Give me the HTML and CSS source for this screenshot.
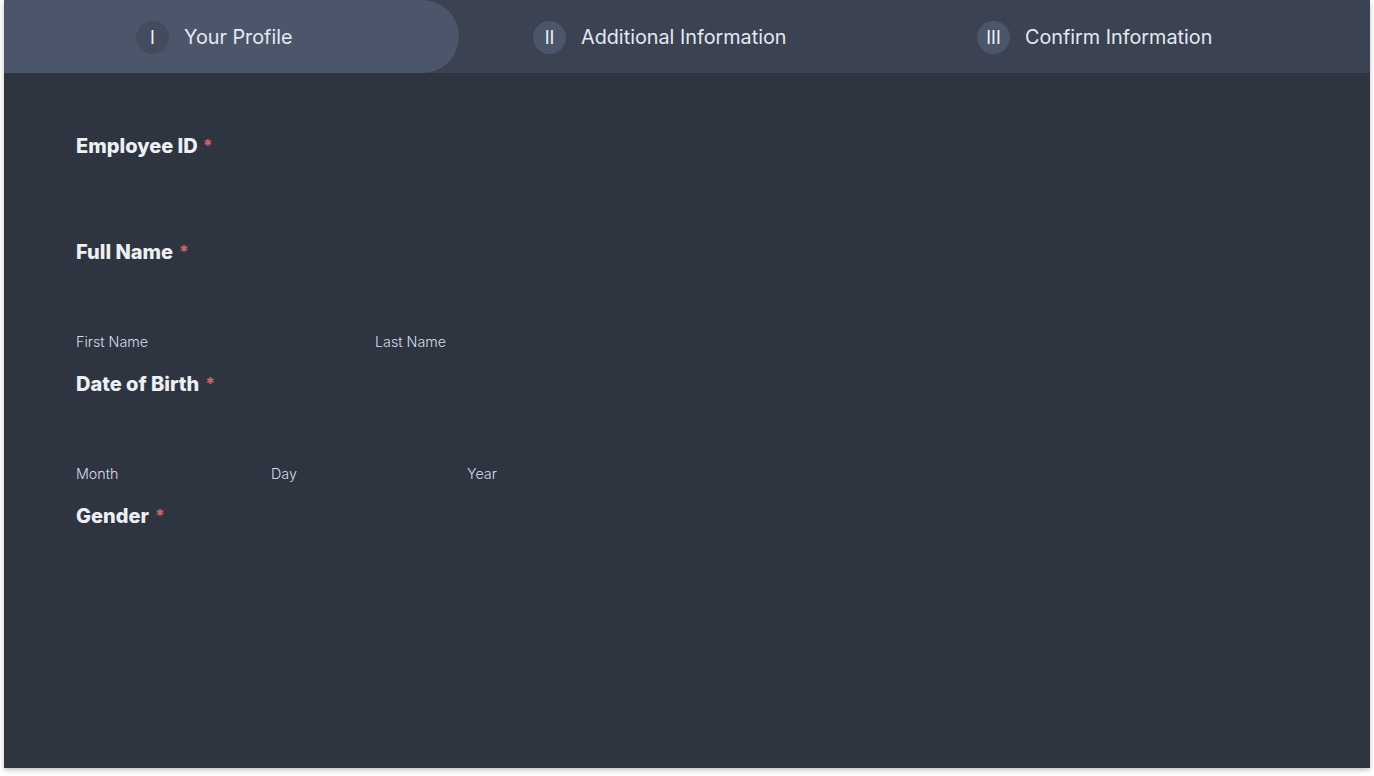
FILE: index.html
```html
<!DOCTYPE html>
<html lang="en">
<head>
<meta charset="utf-8">
<title>Profile</title>
<link rel="stylesheet" href="styles.css">
</head>
<body>
<div class="card">
  <nav class="steps">
    <div class="step step-1 active"><span class="num">I</span><span class="step-label">Your Profile</span></div>
    <div class="step step-2"><span class="num">II</span><span class="step-label">Additional Information</span></div>
    <div class="step step-3"><span class="num">III</span><span class="step-label">Confirm Information</span></div>
  </nav>
  <form class="form">
    <div class="field field-id">
      <div class="label">Employee ID<span class="req req-tight">*</span></div>
      <div class="input-space"></div>
    </div>
    <div class="field field-name">
      <div class="label">Full Name<span class="req">*</span></div>
      <div class="input-space"></div>
      <div class="subrow name-row"><span class="sub">First Name</span><span class="sub">Last Name</span></div>
    </div>
    <div class="field field-dob">
      <div class="label">Date of Birth<span class="req">*</span></div>
      <div class="input-space"></div>
      <div class="subrow dob-row"><span class="sub">Month</span><span class="sub">Day</span><span class="sub">Year</span></div>
    </div>
    <div class="field field-gender">
      <div class="label">Gender<span class="req">*</span></div>
    </div>
  </form>
</div>
</body>
</html>
```
FILE: styles.css
```css
html, body {
  margin: 0;
  padding: 0;
  background: #ffffff;
}
body {
  padding: 0 4px 8px 4px;
  font-family: Inter, "Noto Sans", sans-serif;
}
.card {
  height: 768px;
  background: #2e3440;
  box-shadow: 0 2px 5px rgba(0, 0, 0, 0.25);
  display: flex;
  flex-direction: column;
}
.steps {
  height: 73px;
  background: #3b4252;
  display: grid;
  grid-template-columns: 455px 455px 1fr;
}
.step {
  display: flex;
  align-items: center;
  gap: 15px;
  padding-top: 1px;
  color: #e5e9f0;
}
.step.active {
  background: #4c566a;
  border-radius: 0 37px 37px 0;
}
.step-1 { padding-left: 132px; }
.step-2 { padding-left: 74px; }
.step-3 { padding-left: 63px; }
.num {
  width: 33px;
  height: 33px;
  border-radius: 50%;
  background: #4c566a;
  display: flex;
  align-items: center;
  justify-content: center;
  font-size: 18px;
  color: #eceff4;
}
.active .num {
  background: #434c5e;
}
.step-label {
  font-size: 19.8px;
}
.form {
  padding: 61px 72px 0 72px;
}
.label {
  font-size: 20px;
  line-height: 24px;
  font-weight: 800;
  color: #eceff4;
}
.req {
  color: #c9646e;
  font-size: 17px;
  vertical-align: top;
  margin-left: 6px;
}
.req-tight {
  margin-left: 5px;
}
.field-id .input-space { height: 82px; }
.field-name .input-space { height: 69px; }
.field-dob .input-space { height: 69px; }
.subrow {
  display: grid;
  font-size: 14.3px;
  line-height: 18px;
  color: #d8dee9;
  font-weight: 300;
  margin-bottom: 21px;
}
.name-row { grid-template-columns: 299px 1fr; }
.dob-row { grid-template-columns: 195px 196px 1fr; }
```
